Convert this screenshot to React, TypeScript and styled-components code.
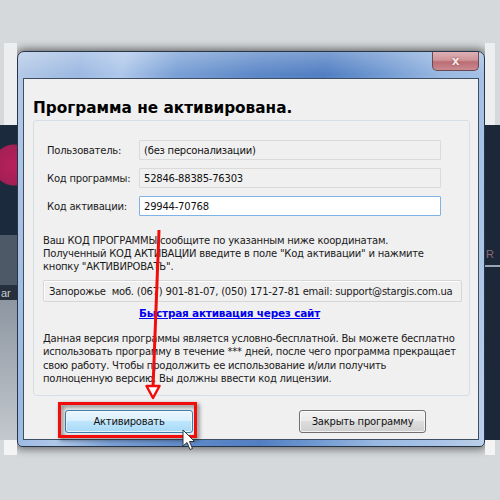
import React from "react";
import styled, { createGlobalStyle } from "styled-components";

const GlobalStyle = createGlobalStyle`
  html, body {
    margin: 0;
    padding: 0;
    background: #d6d9db;
  }
  body {
    font-family: "DejaVu Sans", "Noto Sans", sans-serif;
    font-size: 10px;
    letter-spacing: -0.22px;
    color: #1a1a1a;
  }
`;

const Page = styled.div`
  position: relative;
  width: 500px;
  height: 500px;
  padding-top: 43px;
  box-sizing: border-box;
  overflow: hidden;
`;

const Screen = styled.div`
  display: flex;
  align-items: flex-start;
  width: 500px;
  height: 412px;
`;

const Strip = styled.div<{ $w: number }>`
  width: ${({ $w }) => $w}px;
  height: 100%;
  display: flex;
  flex-direction: column;
  flex-shrink: 0;
`;

const Segment = styled.div<{ $h: number; $bg: string }>`
  height: ${({ $h }) => $h}px;
  background: ${({ $bg }) => $bg};
  position: relative;
  overflow: hidden;
  flex-shrink: 0;
`;

const SegmentText = styled.span<{ $color: string; $top?: number }>`
  display: block;
  padding: ${({ $top }) => $top ?? 2}px 0 0 1px;
  font-family: "Liberation Sans", sans-serif;
  font-size: 11px;
  letter-spacing: 0;
  color: ${({ $color }) => $color};
  white-space: nowrap;
`;

/* aero window frame */
const Frame = styled.div`
  width: 468px;
  height: 396px;
  margin-top: 8px;
  flex-shrink: 0;
  box-sizing: border-box;
  border: 1px solid #26354a;
  border-radius: 7px 7px 5px 5px;
  padding: 0 5px 6px 5px;
  display: flex;
  flex-direction: column;
  background:
    linear-gradient(180deg, rgba(255, 255, 255, 0.25) 0px, rgba(255, 255, 255, 0) 22px),
    linear-gradient(
      100deg,
      #b5cae6 0%,
      #9cb9e2 12%,
      #afc8ea 20%,
      #7ba1d6 30%,
      #5e89c8 45%,
      #527fc3 58%,
      #6f98d1 68%,
      #9ab9e2 80%,
      #a9c4e7 92%,
      #bcd0ea 100%
    );
  box-shadow: 0 0 9px 2px rgba(0, 0, 0, 0.55);
`;

const TitleBar = styled.div`
  height: 26px;
  display: flex;
  justify-content: flex-end;
  align-items: flex-start;
`;

const CloseButton = styled.div`
  width: 47px;
  height: 19px;
  box-sizing: border-box;
  border: 1px solid #6a4a52;
  border-top: none;
  border-radius: 0 0 5px 5px;
  background: linear-gradient(180deg, #ddb0b4 0%, #cf959a 45%, #bb6d74 55%, #c98a90 100%);
  display: flex;
  align-items: center;
  justify-content: center;
  font-family: "DejaVu Sans", sans-serif;
  font-weight: bold;
  font-size: 12px;
  letter-spacing: 0;
  color: #f4e6e7;
  text-shadow: 0 0 2px #7a4048;
`;

const Client = styled.div`
  flex: 1;
  box-sizing: border-box;
  border: 1px solid #3e4e63;
  background: #f0f0f0;
  padding: 19px 0 0 9px;
  display: flex;
  flex-direction: column;
`;

const Heading = styled.div`
  font-size: 15.3px;
  font-weight: bold;
  letter-spacing: 0;
  line-height: 20px;
  color: #000;
`;

const GroupBox = styled.div`
  width: 437px;
  height: 276px;
  margin-top: 2px;
  box-sizing: border-box;
  border: 1px solid #d7dfe6;
  border-radius: 3px;
  padding: 19px 0 0 0;
  display: flex;
  flex-direction: column;
`;

const FieldRow = styled.div`
  display: flex;
  align-items: center;
  height: 20px;
  margin-bottom: 8px;
  padding-left: 13px;
`;

const FieldLabel = styled.div`
  width: 92px;
  flex-shrink: 0;
`;

const Field = styled.div<{ $active?: boolean }>`
  width: 302px;
  height: 20px;
  box-sizing: border-box;
  padding: 0 4px;
  display: flex;
  align-items: center;
  background: ${({ $active }) => ($active ? "#ffffff" : "#f0f0f0")};
  border: 1px solid ${({ $active }) => ($active ? "#7db3e6" : "#dadada")};
  border-radius: 1px;
  color: #111;
`;

const InfoText = styled.div`
  margin-top: 10px;
  padding-left: 9px;
  line-height: 13px;
  white-space: nowrap;
`;

const ContactBox = styled.div`
  margin: 7px 0 0 9px;
  width: 419px;
  height: 22px;
  box-sizing: border-box;
  border: 1px solid #d6d6d6;
  box-shadow: inset 1px 1px 0 #ffffff;
  border-radius: 2px;
  padding-left: 5px;
  display: flex;
  align-items: center;
  white-space: nowrap;
`;

const QuickLink = styled.a`
  margin: 4px 0 0 105px;
  line-height: 14px;
  font-weight: bold;
  font-size: 10.5px;
  color: #0000ee;
  text-decoration: underline;
  white-space: nowrap;
  cursor: pointer;
`;

const Notice = styled.div`
  margin-top: 12px;
  padding-left: 9px;
  line-height: 13.4px;
  white-space: nowrap;
`;

const ButtonRow = styled.div`
  display: flex;
  align-items: flex-start;
  margin-top: 14px;
  padding-left: 32px;
`;

const Button = styled.button<{ $hot?: boolean }>`
  height: 23px;
  box-sizing: border-box;
  border: 1px solid ${({ $hot }) => ($hot ? "#3c7fb1" : "#707070")};
  border-radius: 3px;
  font-family: "DejaVu Sans", sans-serif;
  font-size: 10px;
  letter-spacing: -0.22px;
  color: #111;
  padding: 0;
  background: ${({ $hot }) =>
    $hot
      ? "linear-gradient(180deg, #eaf6fd 0%, #d9f0fc 45%, #bee6fd 50%, #a7d9f5 100%)"
      : "linear-gradient(180deg, #f2f2f2 0%, #ebebeb 45%, #dddddd 50%, #cfcfcf 100%)"};
  box-shadow: inset 0 0 0 1px rgba(255, 255, 255, 0.7);
`;

const ActivateButton = styled(Button)`
  width: 128px;
`;

const CloseProgramButton = styled(Button)`
  width: 127px;
  margin-left: 106px;
`;

const Overlay = styled.svg`
  position: absolute;
  left: 0;
  top: 0;
  pointer-events: none;
`;

export default function App() {
  return (
    <>
      <GlobalStyle />
      <Page>
        <Screen>
          <Strip $w={17}>
            <Segment $h={82} $bg="linear-gradient(90deg, #d6d9db 4px, #eceeef 4px)" />
            <Segment
              $h={110}
              $bg="radial-gradient(circle at 14px 40px, #b8225a 0, #a31f55 20px, #1b2a3d 21px), #1b2a3d"
            />
            <Segment $h={50} $bg="#4e5967" />
            <Segment $h={15} $bg="#27313d">
              <SegmentText $color="#c7cbd0">ar</SegmentText>
            </Segment>
            <Segment $h={140} $bg="linear-gradient(180deg, #8d96a1, #c3c8ce)" />
            <Segment $h={15} $bg="linear-gradient(90deg, #d6d9db 4px, #f4f4f4 4px)" />
          </Strip>

          <Frame>
            <TitleBar>
              <CloseButton>x</CloseButton>
            </TitleBar>
            <Client>
              <Heading>Программа не активирована.</Heading>
              <GroupBox>
                <FieldRow>
                  <FieldLabel>Пользователь:</FieldLabel>
                  <Field>(без персонализации)</Field>
                </FieldRow>
                <FieldRow>
                  <FieldLabel>Код программы:</FieldLabel>
                  <Field>52846-88385-76303</Field>
                </FieldRow>
                <FieldRow>
                  <FieldLabel>Код активации:</FieldLabel>
                  <Field $active>29944-70768</Field>
                </FieldRow>

                <InfoText>
                  Ваш КОД ПРОГРАММЫ сообщите по указанным ниже координатам.
                  <br />
                  Полученный КОД АКТИВАЦИИ введите в поле "Код активации" и нажмите
                  <br />
                  кнопку "АКТИВИРОВАТЬ".
                </InfoText>

                <ContactBox>
                  Запорожье&nbsp; моб. (067) 901-81-07, (050) 171-27-81 email: support@stargis.com.ua
                </ContactBox>

                <QuickLink>Быстрая активация через сайт</QuickLink>

                <Notice>
                  Данная версия программы является условно-бесплатной. Вы можете бесплатно
                  <br />
                  использовать программу в течение *** дней, после чего программа прекращает
                  <br />
                  свою работу. Чтобы продолжить ее использование и/или получить
                  <br />
                  полноценную версию. Вы должны ввести код лицензии.
                </Notice>
              </GroupBox>

              <ButtonRow>
                <ActivateButton $hot>Активировать</ActivateButton>
                <CloseProgramButton>Закрыть программу</CloseProgramButton>
              </ButtonRow>
            </Client>
          </Frame>

          <Strip $w={15}>
            <Segment $h={82} $bg="linear-gradient(90deg, #eceeef 10px, #d6d9db 10px)" />
            <Segment $h={140} $bg="#1c2838">
              <SegmentText $color="#8a6a7a" $top={123}>R</SegmentText>
            </Segment>
            <Segment $h={2} $bg="#9aa6b4" />
            <Segment $h={173} $bg="#1c2838" />
            <Segment $h={15} $bg="linear-gradient(90deg, #f4f4f4 10px, #d6d9db 10px)" />
          </Strip>
        </Screen>

        <Overlay width={500} height={500} viewBox="0 0 500 500">
          <defs>
            <filter id="soft-shadow" x="-20%" y="-40%" width="140%" height="180%">
              <feDropShadow dx="2" dy="2" stdDeviation="2" floodColor="#000" floodOpacity="0.55" />
            </filter>
          </defs>
          {/* callout frame around the activate button */}
          <rect
            x={59.5}
            y={403.5}
            width={136}
            height={33}
            fill="none"
            stroke="#f20d0d"
            strokeWidth={3}
            filter="url(#soft-shadow)"
          />
          {/* pointer arrow */}
          <line x1={159} y1={230} x2={153} y2={388} stroke="#f20d0d" strokeWidth={3} />
          <polygon
            points="146.5,386 159.5,386 153,398"
            fill="#ffffff"
            stroke="#f20d0d"
            strokeWidth={2.5}
            strokeLinejoin="round"
          />
          {/* mouse cursor */}
          <path
            d="M183 430 L183 446 L187 442.5 L190 449.5 L192.5 448.5 L189.5 441.5 L194.5 441.5 Z"
            fill="#ffffff"
            stroke="#333"
            strokeWidth={1}
            strokeLinejoin="round"
          />
        </Overlay>
      </Page>
    </>
  );
}
